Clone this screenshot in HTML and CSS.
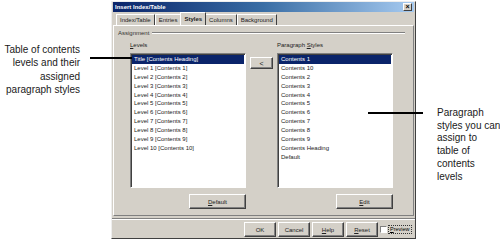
FILE: index.html
```html
<!DOCTYPE html>
<html lang="en">
<head>
  <meta charset="UTF-8" />
  <title>Insert Index/Table - Styles</title>
  <link rel="stylesheet" href="styles.css">
</head>
<body>
  <div class="page">
    <div class="note note-left">Table of contents<br>levels and their<br>assigned<br>paragraph styles</div>

    <div class="dialog">
      <div class="titlebar">
        <span>Insert Index/Table</span>
        <span class="close">&#215;</span>
      </div>

      <div class="tabs">
        <div class="tab">Index/Table</div>
        <div class="tab">Entries</div>
        <div class="tab active">Styles</div>
        <div class="tab">Columns</div>
        <div class="tab">Background</div>
      </div>

      <div class="tabpage">
        <div class="group-title">
          <span>Assignment</span>
          <div class="etched"></div>
        </div>

        <div class="assign">
          <div class="col">
            <div class="label"><u>L</u>evels</div>
            <div class="list">
              <div class="row selected">Title [Contents Heading]</div>
              <div class="row">Level 1 [Contents 1]</div>
              <div class="row">Level 2 [Contents 2]</div>
              <div class="row">Level 3 [Contents 3]</div>
              <div class="row">Level 4 [Contents 4]</div>
              <div class="row">Level 5 [Contents 5]</div>
              <div class="row">Level 6 [Contents 6]</div>
              <div class="row">Level 7 [Contents 7]</div>
              <div class="row">Level 8 [Contents 8]</div>
              <div class="row">Level 9 [Contents 9]</div>
              <div class="row">Level 10 [Contents 10]</div>
            </div>
            <div class="btn wide"><u>D</u>efault</div>
          </div>

          <div class="mid">
            <div class="btn arrow">&lt;</div>
          </div>

          <div class="col">
            <div class="label">Paragraph <u>S</u>tyles</div>
            <div class="list">
              <div class="row selected">Contents 1</div>
              <div class="row">Contents 10</div>
              <div class="row">Contents 2</div>
              <div class="row">Contents 3</div>
              <div class="row">Contents 4</div>
              <div class="row">Contents 5</div>
              <div class="row">Contents 6</div>
              <div class="row">Contents 7</div>
              <div class="row">Contents 8</div>
              <div class="row">Contents 9</div>
              <div class="row">Contents Heading</div>
              <div class="row">Default</div>
            </div>
            <div class="btn wide"><u>E</u>dit</div>
          </div>
        </div>
      </div>

      <div class="footer">
        <div class="btn">OK</div>
        <div class="btn">Cancel</div>
        <div class="btn"><u>H</u>elp</div>
        <div class="btn"><u>R</u>eset</div>
        <div class="preview">
          <span class="checkbox"></span>
          <span class="focus"><u>P</u>review</span>
        </div>
      </div>
    </div>

    <div class="note note-right">Paragraph<br>styles you can<br>assign to<br>table of<br>contents<br>levels</div>

    <!-- callout lines -->
    <div class="pointer pointer-left"></div>
    <div class="pointer pointer-right"></div>
  </div>
</body>
</html>
```

FILE: styles.css
```css
body {
  margin: 0;
  background-color: #fff;
  font-family: "Liberation Sans", Arial, sans-serif;
  color: #000;
}

.page {
  display: flex;
  width: 500px;
  height: 240px;
  position: relative;
  overflow: hidden;
}

.note {
  font-size: 10px;
  color: #1a1a1a;
  white-space: nowrap;
}

.note-left {
  width: 111px;
  flex-shrink: 0;
  box-sizing: border-box;
  padding: 43px 31px 0 0;
  text-align: right;
  line-height: 13.4px;
}

.note-right {
  padding: 107px 0 0 21px;
  line-height: 12.7px;
}

.pointer {
  position: absolute;
  height: 2px;
  background-color: #000;
}

.pointer-left {
  left: 90px;
  top: 57px;
  width: 42px;
}

.pointer-right {
  left: 368px;
  top: 112px;
  width: 55px;
}

/* dialog window */
.dialog {
  width: 305px;
  height: 238px;
  flex-shrink: 0;
  margin-top: 1px;
  box-sizing: border-box;
  background-color: #d4d0c8;
  border: 1px solid;
  border-color: #eeeeee #404040 #404040 #eeeeee;
  display: flex;
  flex-direction: column;
  font-size: 6px;
}

.titlebar {
  height: 10px;
  margin: 0 1px;
  padding: 0 2px;
  background: linear-gradient(90deg, #0a246a 0%, #3a6ea5 50%, #a6caf0 100%);
  color: #fff;
  font-weight: bold;
  display: flex;
  align-items: center;
  justify-content: space-between;
}

.close {
  width: 7px;
  height: 6px;
  background-color: #d4d0c8;
  color: #000;
  font-size: 7px;
  line-height: 6px;
  text-align: center;
  border: 1px solid;
  border-color: #fff #404040 #404040 #fff;
}

.tabs {
  display: flex;
  align-items: flex-end;
  margin-top: 1px;
  padding-left: 4px;
  height: 12px;
}

.tab {
  height: 10px;
  line-height: 10px;
  padding: 0 3px;
  border: 1px solid;
  border-bottom: none;
  border-color: #fff #404040 transparent #fff;
  color: #222;
}

.tab.active {
  height: 12px;
  line-height: 12px;
  font-weight: bold;
  margin: 0 -1px;
  position: relative;
  z-index: 1;
  background-color: #d4d0c8;
}

.tabpage {
  height: 191px;
  margin: 0 1px;
  box-sizing: border-box;
  border: 1px solid;
  border-color: #fff #808080 #808080 #fff;
  padding: 2px 8px 0 4px;
}

.group-title {
  display: flex;
  align-items: center;
  gap: 3px;
  height: 9px;
  color: #333;
}

.etched {
  flex: 1;
  border-top: 1px solid #808080;
  border-bottom: 1px solid #fff;
}

.assign {
  display: flex;
  margin-top: 5px;
  padding-left: 12px;
}

.col {
  width: 116px;
  display: flex;
  flex-direction: column;
}

.label {
  height: 10px;
  color: #222;
}

.list {
  height: 135px;
  margin-top: 1px;
  box-sizing: border-box;
  background-color: #fff;
  border: 1px solid;
  border-color: #808080 #fff #fff #808080;
  box-shadow: inset 1px 1px 0 #404040;
  padding: 1px;
}

.row {
  height: 8.9px;
  line-height: 8.9px;
  padding-left: 2px;
  color: #222;
  white-space: nowrap;
}

.row.selected {
  background-color: #0a246a;
  color: #fff;
}

.mid {
  width: 31px;
  padding: 15px 0 0 4px;
  box-sizing: border-box;
}

.btn {
  height: 15px;
  box-sizing: border-box;
  border: 1px solid;
  border-color: #fff #404040 #404040 #fff;
  box-shadow: inset -1px -1px 0 #808080;
  display: flex;
  align-items: center;
  justify-content: center;
  color: #222;
}

.btn.arrow {
  width: 23px;
  height: 12px;
  font-size: 7px;
}

.btn.wide {
  width: 57px;
  align-self: flex-end;
  margin-top: 6px;
}

.footer {
  margin-top: 2px;
  border-top: 1px solid #808080;
  box-shadow: inset 0 1px 0 #fff;
  display: flex;
  justify-content: flex-end;
  gap: 2px;
  padding: 3px 1px 0 0;
}

.footer .btn {
  width: 32px;
}

.preview {
  width: 34px;
  height: 15px;
  display: flex;
  align-items: center;
  gap: 1px;
  box-sizing: border-box;
  font-size: 5.5px;
}

.checkbox {
  width: 5px;
  height: 5px;
  flex-shrink: 0;
  background-color: #fff;
  border: 1px solid;
  border-color: #808080 #fff #fff #808080;
}

.focus {
  border: 1px dotted #333;
  padding: 0 1px;
  line-height: 7px;
}
```
